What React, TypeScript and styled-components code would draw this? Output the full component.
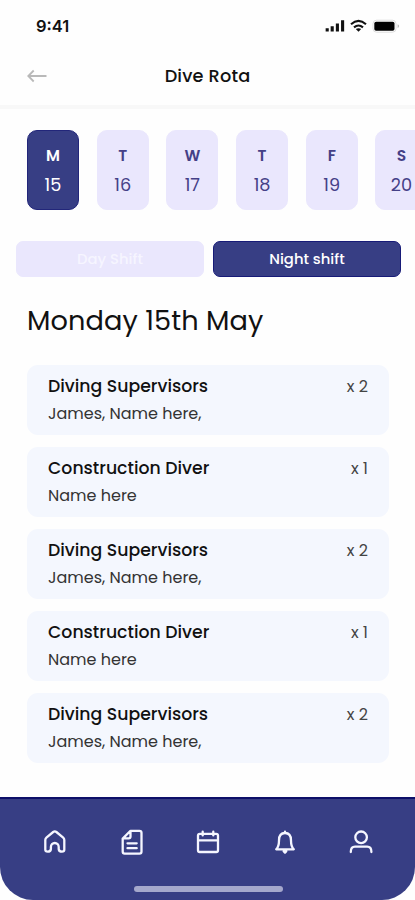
import React from "react";
import styled, { createGlobalStyle } from "styled-components";

const indigo = "#373e84";
const lilac = "#eae7fd";

const GlobalStyle = createGlobalStyle`
  * { box-sizing: border-box; }
  body { margin: 0; background: #fff; }
  button { font: inherit; border: 0; padding: 0; background: none; }
`;

const Screen = styled.div`
  width: 415px;
  height: 900px;
  display: flex;
  flex-direction: column;
  overflow: hidden;
  background: #fefefe;
  color: #111;
  font-family: Poppins, Inter, sans-serif;
`;

const StatusBar = styled.div`
  flex: none;
  height: 52px;
  padding: 0 15px 0 36px;
  display: flex;
  align-items: center;
  justify-content: space-between;
`;

const Clock = styled.span`
  font-family: Inter, sans-serif;
  font-size: 16.5px;
  font-weight: 600;
`;

const StatusIcons = styled.div`
  display: flex;
  align-items: center;
  gap: 5px;
`;

const Header = styled.header`
  flex: none;
  height: 57px;
  padding: 0 27px 5px;
  display: grid;
  grid-template-columns: 22px 1fr 22px;
  align-items: center;
  border-bottom: 4px solid #f8f8f8;
`;

const Title = styled.h1`
  margin: 0;
  text-align: center;
  font-size: 17.7px;
  line-height: 24px;
  font-weight: 500;
  letter-spacing: 0.2px;
`;

const Days = styled.div`
  flex: none;
  height: 80px;
  margin: 21px 0 0 27px;
  display: flex;
  gap: 17.7px;
`;

const Day = styled.button<{ $active?: boolean }>`
  flex: none;
  width: 52px;
  height: 80px;
  padding-top: 13px;
  display: flex;
  flex-direction: column;
  align-items: center;
  border-radius: 10px;
  color: ${(p) => (p.$active ? "#fff" : "#454087")};
  background: ${(p) => (p.$active ? indigo : lilac)};
  border: 1px solid ${(p) => (p.$active ? "#22267a" : lilac)};
`;

const DayLetter = styled.span`
  font-size: 15.5px;
  line-height: 24px;
  font-weight: 600;
`;

const DayNumber = styled.span`
  margin-top: 4px;
  font-size: 17.7px;
  line-height: 26px;
  font-weight: 400;
`;

const Shifts = styled.div`
  flex: none;
  margin: 31px 14px 0 16px;
  display: grid;
  grid-template-columns: 1fr 1fr;
  gap: 9px;
`;

const Shift = styled.button<{ $active?: boolean }>`
  height: 36px;
  border-radius: 7px;
  font-size: 14.8px;
  font-weight: 500;
  color: ${(p) => (p.$active ? "#fff" : "#f6f5ff")};
  background: ${(p) => (p.$active ? indigo : lilac)};
  border: 1px solid ${(p) => (p.$active ? "#171b78" : lilac)};
`;

const DateHeading = styled.h2`
  flex: none;
  margin: 24px 0 0 27px;
  font-size: 27.2px;
  line-height: 40px;
  font-weight: 400;
  letter-spacing: 0.1px;
`;

const Roles = styled.div`
  flex: 1;
  margin: 24px 26px 0 27px;
  display: flex;
  flex-direction: column;
  gap: 12px;
`;

const RoleCard = styled.article`
  flex: none;
  height: 70px;
  padding: 8px 21px 0 21px;
  border-radius: 11px;
  background: #f4f7fe;
`;

const RoleTop = styled.div`
  display: flex;
  justify-content: space-between;
  height: 27px;
  line-height: 27px;
`;

const RoleName = styled.span`
  font-size: 17.3px;
  font-weight: 500;
`;

const Count = styled.span`
  font-size: 16px;
  color: #444;
`;

const People = styled.div`
  font-size: 16px;
  line-height: 27px;
  color: #333;
`;

const BottomBar = styled.nav`
  flex: none;
  height: 103px;
  padding: 0 40px 8px 41px;
  display: flex;
  flex-direction: column;
  align-items: center;
  justify-content: space-between;
  border-top: 2px solid #0d1069;
  border-radius: 0 0 33px 33px;
  background: ${indigo};
`;

const Tabs = styled.div`
  width: 100%;
  padding-top: 29px;
  display: flex;
  justify-content: space-between;
`;

const HomeIndicator = styled.div`
  width: 149px;
  height: 6px;
  border-radius: 3px;
  background: #a5a8cc;
  margin-left: 1px;
`;

const TabIcon = styled.svg`
  width: 28px;
  height: 28px;
  display: block;
  fill: none;
  stroke: #f5f6ff;
  stroke-width: 2.3;
  stroke-linecap: round;
  stroke-linejoin: round;
`;

const week = [
  ["M", "15"], ["T", "16"], ["W", "17"], ["T", "18"], ["F", "19"], ["S", "20"],
];

const supervisors = { role: "Diving Supervisors", count: "x 2", people: "James, Name here," };
const diver = { role: "Construction Diver", count: "x 1", people: "Name here" };
const rota = [supervisors, diver, supervisors, diver, supervisors];

const tabPaths = [
  "M4.3 21.8V12Q4.3 10.5 5.4 9.6L12.2 4Q13.8 2.8 15.4 4L22.2 9.6Q23.3 10.5 23.3 12V21.8Q23.3 23.7 21 23.7Q18 23.7 17.7 21V19A3.9 4 0 0 0 9.9 19V21Q9.6 23.7 6.7 23.7Q4.3 23.7 4.3 21.8Z",
  "M12.5 2.8H21.5Q23.5 2.8 23.5 4.8V23.5Q23.5 25.6 21.5 25.6H6.7Q4.7 25.6 4.7 23.5V10.6ZM12.5 3V8.6Q12.5 10.4 10.7 10.4H5M9.5 15.3H18.7M9.5 20.2H18.7",
  "M5.8 5.8H22.2Q24 5.8 24 7.6V22.2Q24 24 22.2 24H5.8Q4 24 4 22.2V7.6Q4 5.8 5.8 5.8ZM4.3 12.3H23.7M8.7 3.7V7.4M19.3 3.7V7.4",
  "M5.2 21.3C7.6 19 8 16.8 8 12.4C8 7.7 10.3 5 14 5S20 7.7 20 12.4C20 16.8 20.4 19 22.8 21.3ZM14 3.7V5M12.7 23.2L14 24.6L15.3 23.2Z",
  "M3.8 24Q3.8 18.7 8 18.7H20.2Q24.4 18.7 24.4 24M14.1 3.5A5.8 5.8 0 1 1 14.1 15.1A5.8 5.8 0 1 1 14.1 3.5Z",
];

export default function App() {
  return (
    <Screen>
      <GlobalStyle />
      <StatusBar>
        <Clock>9:41</Clock>
        <StatusIcons>
          <svg width="20" height="14" viewBox="0 0 20 14">
            <path d="M2.2 9.3V12.5M7.2 7.2V12.5M12.4 4.5V12.5M17.6 1.2V12.5" stroke="#111" strokeWidth="3.1" />
          </svg>
          <svg width="17" height="14" viewBox="0 0 17 14" fill="none" stroke="#111" strokeWidth="2.1">
            <path d="M1 5.3Q8.5 -1.4 16 5.3M4 8.4Q8.5 4.6 13 8.4" />
            <path d="M5.8 10.1Q8.5 8.3 11.2 10.1L8.5 12.8Z" fill="#111" stroke="none" />
          </svg>
          <svg width="28" height="14" viewBox="0 0 28 14">
            <rect x="1" y="1.2" width="23" height="12" rx="3.6" fill="#fff" stroke="#dedede" />
            <rect x="2.3" y="2.8" width="20.2" height="8.9" rx="1.8" fill="#000" />
            <path d="M25.6 5.2V9Q27.1 8.5 27.1 7.1T25.6 5.2" fill="#bbb" />
          </svg>
        </StatusIcons>
      </StatusBar>
      <Header>
        <svg width="20" height="14" viewBox="0 0 20 14" fill="none" stroke="#b9b9b9" strokeWidth="1.8">
          <path d="M19.5 7H1.5M6.7 1.5L1.3 7L6.7 12.5" />
        </svg>
        <Title>Dive Rota</Title>
      </Header>
      <Days>
        {week.map(([letter, date], i) => (
          <Day key={date} $active={i === 0}>
            <DayLetter>{letter}</DayLetter>
            <DayNumber>{date}</DayNumber>
          </Day>
        ))}
      </Days>
      <Shifts>
        <Shift>Day Shift</Shift>
        <Shift $active>Night shift</Shift>
      </Shifts>
      <DateHeading>Monday 15th May</DateHeading>
      <Roles>
        {rota.map((entry, i) => (
          <RoleCard key={i}>
            <RoleTop>
              <RoleName>{entry.role}</RoleName>
              <Count>{entry.count}</Count>
            </RoleTop>
            <People>{entry.people}</People>
          </RoleCard>
        ))}
      </Roles>
      <BottomBar>
        <Tabs>
          {tabPaths.map((d) => (
            <TabIcon key={d} viewBox="0 0 28 28">
              <path d={d} />
            </TabIcon>
          ))}
        </Tabs>
        <HomeIndicator />
      </BottomBar>
    </Screen>
  );
}
